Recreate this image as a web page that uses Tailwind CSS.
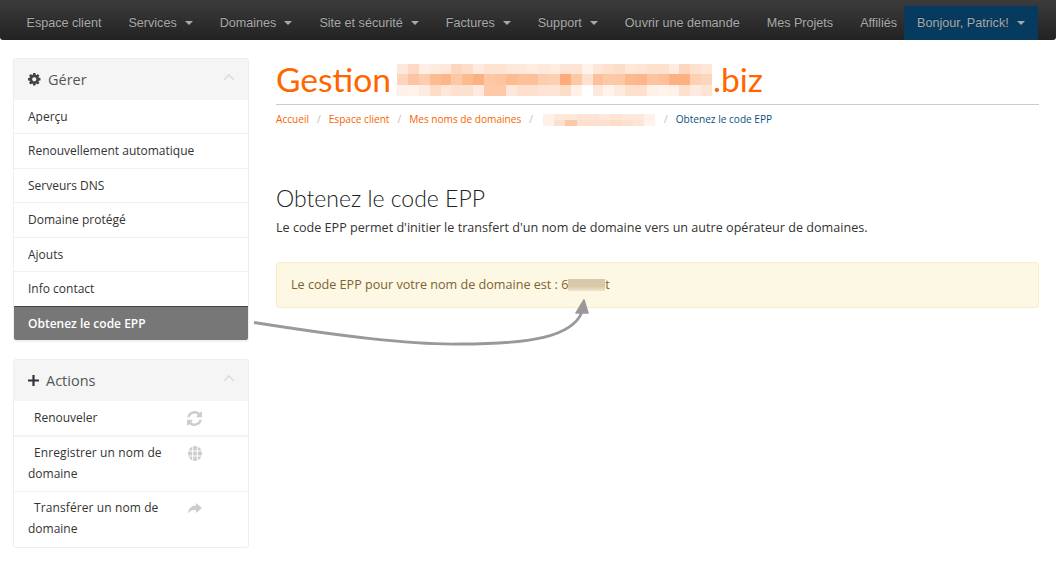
<!DOCTYPE html>
<html lang="fr">
<head>
<meta charset="utf-8">
<script src="https://cdn.jsdelivr.net/npm/@tailwindcss/browser@4"></script>
</head>
<body class="bg-white font-['Open_Sans',sans-serif] text-[#333] text-[12px] h-[561px] overflow-hidden relative">
<nav class="h-[40px] pt-[6px] bg-[linear-gradient(#3b3b3b,#383838_15%,#222)] font-['Liberation_Sans',sans-serif] text-[12.6px] text-[#a9a9a9] flex whitespace-nowrap pl-[13px] pr-[17px] rounded-b-[3px] [text-shadow:0_-1px_0_rgba(0,0,0,0.25)]">
  <a class="shrink-0 px-[13.5px] leading-[34px]">Espace client</a>
  <a class="shrink-0 px-[13.5px] leading-[34px] flex items-center">Services<i class="ml-[8px] border-x-[4px] border-t-[4px] border-x-transparent border-t-[#a9a9a9]"></i></a>
  <a class="shrink-0 px-[13.5px] leading-[34px] flex items-center">Domaines<i class="ml-[8px] border-x-[4px] border-t-[4px] border-x-transparent border-t-[#a9a9a9]"></i></a>
  <a class="shrink-0 px-[13.5px] leading-[34px] flex items-center">Site et sécurité<i class="ml-[8px] border-x-[4px] border-t-[4px] border-x-transparent border-t-[#a9a9a9]"></i></a>
  <a class="shrink-0 px-[13.5px] leading-[34px] flex items-center">Factures<i class="ml-[8px] border-x-[4px] border-t-[4px] border-x-transparent border-t-[#a9a9a9]"></i></a>
  <a class="shrink-0 px-[13.5px] leading-[34px] flex items-center">Support<i class="ml-[8px] border-x-[4px] border-t-[4px] border-x-transparent border-t-[#a9a9a9]"></i></a>
  <a class="shrink-0 px-[13.5px] leading-[34px]">Ouvrir une demande</a>
  <a class="shrink-0 px-[13.5px] leading-[34px]">Mes Projets</a>
  <a class="shrink-0 pl-[13.5px] pr-[6.5px] leading-[34px]">Affiliés</a>
  <a class="shrink-0 px-[13.5px] leading-[34px] flex items-center bg-[#063a5f]">Bonjour, Patrick!<i class="ml-[8px] border-x-[4px] border-t-[4px] border-x-transparent border-t-[#a9a9a9]"></i></a>
</nav>

<div class="flex pl-[13px] pr-[17px] pt-[18px] gap-[27px]">
  <aside class="w-[236px] shrink-0 flex flex-col gap-[18px]">
    <section class="border border-[#eeeeee] rounded-[3px] shadow-[0_1px_1px_rgba(0,0,0,0.05)] overflow-hidden">
      <header class="h-[41px] bg-[#f5f5f5] flex items-center pl-[14px] pr-[13px] text-[14.5px] text-[#555]">
        <svg class="w-[12.5px] h-[12.5px] mr-[7.5px]" viewBox="128 128 1536 1536"><path fill="#444" d="M1152 896q0-106-75-181t-181-75-181 75-75 181 75 181 181 75 181-75 75-181zm512-109v222q0 12-8 23t-20 13l-185 28q-19 54-39 91 35 50 107 138 10 12 10 25t-9 23q-27 37-99 108t-94 71q-12 0-26-9l-138-108q-44 23-91 38-16 136-29 186-7 28-36 28h-222q-14 0-24.500-8.500t-11.500-21.500l-28-184q-49-16-90-37l-141 107q-10 9-25 9-14 0-25-11-126-114-165-168-7-10-7-23 0-12 8-23 15-21 51-66.500t54-70.500q-27-50-41-99l-183-27q-13-2-21-12.500t-8-23.500v-222q0-12 8-23t19-13l186-28q14-46 39-92-40-57-107-138-10-12-10-24 0-10 9-23 26-36 98.500-107.500t94.500-71.500q13 0 26 10l138 107q44-23 91-38 16-136 29-186 7-28 36-28h222q14 0 24.500 8.500t11.500 21.500l28 184q49 16 90 37l142-107q9-9 24-9 13 0 25 10 129 119 165 170 7 8 7 22 0 12-8 23-15 21-51 66.500t-54 70.500q26 50 41 98l183 28q13 2 21 12.500t8 23.500z"/></svg>
        <span>Gérer</span>
        <svg class="ml-auto w-[12px] h-[8px] -mt-[6px]" viewBox="0 0 12 8"><path d="M1 7l5-5 5 5" fill="none" stroke="#ddd" stroke-width="1.600"/></svg>
      </header>
      <a class="block h-[33px] leading-[34px] pl-[14px]">Aperçu</a>
      <a class="block h-[34.5px] leading-[33px] pl-[14px] border-t border-[#f0f0f0]">Renouvellement automatique</a>
      <a class="block h-[34.5px] leading-[33px] pl-[14px] border-t border-[#f0f0f0]">Serveurs DNS</a>
      <a class="block h-[34.5px] leading-[33px] pl-[14px] border-t border-[#f0f0f0]">Domaine protégé</a>
      <a class="block h-[34.5px] leading-[33px] pl-[14px] border-t border-[#f0f0f0]">Ajouts</a>
      <a class="block h-[34.5px] leading-[33px] pl-[14px] border-t border-[#f0f0f0]">Info contact</a>
      <a class="block h-[34px] leading-[33px] pl-[14px] border-t border-[#444] bg-[#777] text-white font-semibold">Obtenez le code EPP</a>
    </section>
    <section class="border border-[#eeeeee] rounded-[3px] overflow-hidden">
      <header class="h-[41px] pt-[1px] bg-[#f5f5f5] flex items-center pl-[14px] pr-[13px] text-[14.5px] text-[#555]">
        <svg class="w-[11px] h-[11px] mr-[7px]" viewBox="0 0 11 11"><path d="M5.500 0v11M0 5.500h11" stroke="#333" stroke-width="2.200"/></svg>
        <span>Actions</span>
        <svg class="ml-auto w-[12px] h-[8px] -mt-[6px]" viewBox="0 0 12 8"><path d="M1 7l5-5 5 5" fill="none" stroke="#ddd" stroke-width="1.600"/></svg>
      </header>
      <a class="relative block h-[34px] leading-[34px] pl-[20px]">Renouveler
        <svg class="absolute left-[173px] top-[10px] w-[15px] h-[15px]" viewBox="128 128 1536 1536"><path fill="#ccc" d="M1639 1056q0 5-1 7-64 268-268 434.500t-478 166.500q-146 0-282.500-55t-243.500-157l-129 129q-19 19-45 19t-45-19-19-45v-448q0-26 19-45t45-19h448q26 0 45 19t19 45-19 45l-137 137q71 66 161 102t187 36q134 0 250-65t186-179q11-17 53-117 8-23 30-23h192q13 0 22.500 9.500t9.500 22.500zm25-800v448q0 26-19 45t-45 19h-448q-26 0-45-19t-19-45 19-45l138-138q-148-137-349-137-134 0-250 65t-186 179q-11 17-53 117-8 23-30 23h-199q-13 0-22.500-9.500t-9.500-22.500v-7q65-268 270-434.500t480-166.500q146 0 284 55.500t245 156.500l130-129q19-19 45-19t45 19 19 45z"/></svg>
      </a>
      <a class="relative block h-[56px] pt-[5.5px] leading-[21px] border-t-2 border-[#f3f3f3] pl-[14px]"><span class="pl-[6px] tracking-[0.1px]">Enregistrer un nom de</span><br>domaine
        <svg class="absolute left-[174px] top-[9px] w-[14px] h-[15px]" viewBox="0 0 14 14" preserveAspectRatio="none"><circle cx="7" cy="7" r="7" fill="#ccc"/><path d="M0 4.700h14M0 9.300h14M4.700 0v14M9.300 0v14" stroke="#fff" stroke-width="1"/></svg>
      </a>
      <a class="relative block h-[56px] pt-[5.5px] leading-[21px] border-t border-[#f0f0f0] pl-[14px]"><span class="pl-[6px] tracking-[0.1px]">Transférer un nom de</span><br>domaine
        <svg class="absolute left-[173px] top-[10px] w-[15px] h-[14px]" viewBox="0 0 15 14"><path d="M9 1l6 5-6 5V8C5 8 2.500 8.500 1 12c0-5 3-8.500 8-8.500z" fill="#ccc"/></svg>
      </a>
    </section>
  </aside>

  <main class="flex-1 min-w-0">
    <div class="h-[47px] border-b border-[#cccccc] flex items-center">
      <h1 class="font-['Lato',sans-serif] text-[33.6px] leading-[44px] text-[#ff6600] flex items-center mt-[-4px]">
        <span>Gestion</span>
        <span class="ml-[6px] mr-[1px] w-[315px] h-[32px] mt-[1px] grid grid-cols-[repeat(29,1fr)] grid-rows-3">
          <i class="bg-[#fde8dc]"></i><i class="bg-[#fdd8c4]"></i><i class="bg-[#feeee4]"></i><i class="bg-[#feeadf]"></i><i class="bg-[#fee8dc]"></i><i class="bg-[#fdd6c0]"></i><i class="bg-[#fddcc8]"></i><i class="bg-[#feeae0]"></i><i class="bg-[#fee2d2]"></i><i class="bg-[#fee2d2]"></i><i class="bg-[#fee8dc]"></i><i class="bg-[#fee8dc]"></i><i class="bg-[#feecdf]"></i><i class="bg-[#fee8dc]"></i><i class="bg-[#feecdf]"></i><i class="bg-[#fee4d4]"></i><i class="bg-[#fee4d4]"></i><i class="bg-[#fff3ec]"></i><i class="bg-[#fee6d8]"></i><i class="bg-[#fee0ce]"></i><i class="bg-[#fddcc8]"></i><i class="bg-[#fee6d8]"></i><i class="bg-[#fee4d4]"></i><i class="bg-[#fee0ce]"></i><i class="bg-[#fee0ce]"></i><i class="bg-[#feecdf]"></i><i class="bg-[#fdd6c0]"></i><i class="bg-[#fee0ce]"></i><i class="bg-[#fee6d8]"></i>
          <i class="bg-[#fdd4bc]"></i><i class="bg-[#fdc4a2]"></i><i class="bg-[#fdcdb0]"></i><i class="bg-[#fdbb92]"></i><i class="bg-[#fdb68a]"></i><i class="bg-[#fdc8a6]"></i><i class="bg-[#fdbb92]"></i><i class="bg-[#fdb080]"></i><i class="bg-[#fdc8a6]"></i><i class="bg-[#fdc4a2]"></i><i class="bg-[#fdbb92]"></i><i class="bg-[#fdc09a]"></i><i class="bg-[#fdc09a]"></i><i class="bg-[#fdcdb0]"></i><i class="bg-[#fdd0b4]"></i><i class="bg-[#fdab78]"></i><i class="bg-[#fdc8a6]"></i><i class="bg-[#fee0ce]"></i><i class="bg-[#fdc09a]"></i><i class="bg-[#fdc8a6]"></i><i class="bg-[#fdc8a6]"></i><i class="bg-[#fdb88e]"></i><i class="bg-[#fdb68a]"></i><i class="bg-[#fdc4a2]"></i><i class="bg-[#fdc09a]"></i><i class="bg-[#fdb080]"></i><i class="bg-[#fdb080]"></i><i class="bg-[#fdd0b4]"></i><i class="bg-[#fdd4bc]"></i>
          <i class="bg-[#fff0e8]"></i><i class="bg-[#fff3ec]"></i><i class="bg-[#feeadf]"></i><i class="bg-[#fddcc8]"></i><i class="bg-[#fee6d8]"></i><i class="bg-[#fee0ce]"></i><i class="bg-[#fee0ce]"></i><i class="bg-[#feeadf]"></i><i class="bg-[#fdc9a8]"></i><i class="bg-[#fdc9a8]"></i><i class="bg-[#fee8dc]"></i><i class="bg-[#fee0ce]"></i><i class="bg-[#fee0ce]"></i><i class="bg-[#fee4d4]"></i><i class="bg-[#fee4d4]"></i><i class="bg-[#fddcc8]"></i><i class="bg-[#fff0e8]"></i><i class="bg-[#ffffff]"></i><i class="bg-[#fee8dc]"></i><i class="bg-[#fff3ec]"></i><i class="bg-[#feeadf]"></i><i class="bg-[#fee0ce]"></i><i class="bg-[#fee0ce]"></i><i class="bg-[#fff0e8]"></i><i class="bg-[#fff3ec]"></i><i class="bg-[#fff0e8]"></i><i class="bg-[#fee0ce]"></i><i class="bg-[#feeadf]"></i><i class="bg-[#fee4d4]"></i>
        </span>
        <span>.biz</span>
      </h1>
    </div>
    <div class="flex items-center h-[14px] mt-[8px] text-[10.1px] text-[#f96400]">
      <a>Accueil</a><span class="text-[#bbb] px-[8px]">/</span>
      <a>Espace client</a><span class="text-[#bbb] px-[8px]">/</span>
      <a>Mes noms de domaines</a><span class="text-[#bbb] px-[8px]">/</span>
      <span class="w-[112px] h-[12px] ml-[2px] mr-[1px] grid grid-cols-10 grid-rows-2">
        <i class="bg-[#fff1e8]"></i><i class="bg-[#fee8dc]"></i><i class="bg-[#fee8dc]"></i><i class="bg-[#fee4d4]"></i><i class="bg-[#fee4d4]"></i><i class="bg-[#fee8dc]"></i><i class="bg-[#fee4d4]"></i><i class="bg-[#fee8dc]"></i><i class="bg-[#fee8dc]"></i><i class="bg-[#fff1e8]"></i>
        <i class="bg-[#fff1e8]"></i><i class="bg-[#fee0ce]"></i><i class="bg-[#fdc8a6]"></i><i class="bg-[#fee0ce]"></i><i class="bg-[#fee0ce]"></i><i class="bg-[#fee0ce]"></i><i class="bg-[#fddcc8]"></i><i class="bg-[#fee0ce]"></i><i class="bg-[#fee4d4]"></i><i class="bg-[#fff5ee]"></i>
      </span><span class="text-[#bbb] px-[8px]">/</span>
      <span class="text-[#0c5280]">Obtenez le code EPP</span>
    </div>
    <h2 class="font-['Lato',sans-serif] font-light text-[23px] leading-[28px] mt-[57px] text-[#222]">Obtenez le code EPP</h2>
    <p class="mt-[7px] leading-[17px] text-[12.6px]">Le code EPP permet d'initier le transfert d'un nom de domaine vers un autre opérateur de domaines.</p>
    <div class="mt-[26px] h-[46px] bg-[#fcf8e3] border border-[#faebcc] rounded-[3px] text-[#7f622f] text-[12.6px] flex items-center pl-[14px]">
      Le code EPP pour votre nom de domaine est : 6<span class="w-[37px] h-[12px] bg-[linear-gradient(#d9c9a8,#d8c8a8_60%,#eee5cd)]"></span>t
    </div>
  </main>
</div>

<svg class="absolute left-[250px] top-[295px] w-[350px] h-[60px] pointer-events-none" viewBox="0 0 350 60">
  <path d="M4 27.500C90 41 160 50 210 49C280 49 322 42 332 17" fill="none" stroke="#999" stroke-width="2.800"/>
  <path d="M334 5L326 18L338 18Z" fill="#999" stroke="#999" stroke-width="1.500" stroke-linejoin="round"/>
</svg>
</body>
</html>
